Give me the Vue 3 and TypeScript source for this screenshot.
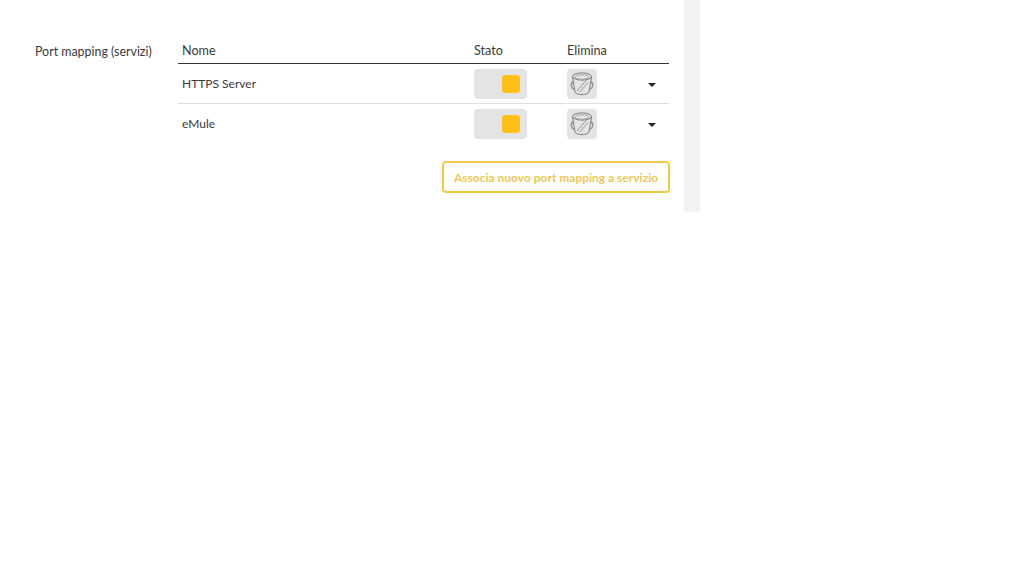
<script setup lang="ts">
const rows: string[] = ['HTTPS Server', 'eMule']
</script>

<template>
  <div class="panel">
    <main class="content">
      <div class="label">Port mapping (servizi)</div>
      <div class="body">
        <div class="row head">
          <div class="name">Nome</div>
          <div class="state">Stato</div>
          <div>Elimina</div>
        </div>
        <div class="rows">
          <div v-for="r in rows" :key="r" class="row item">
            <div class="name">{{ r }}</div>
            <div class="state">
              <div class="toggle"><span class="knob"></span></div>
            </div>
            <div class="del">
              <button class="trash" aria-label="Elimina">
                <svg width="26" height="26" viewBox="0 0 26 26" fill="none" stroke="#7c7c7c" stroke-width="1">
                  <ellipse cx="13" cy="5.5" rx="9.5" ry="3.6" />
                  <ellipse cx="13" cy="6" rx="7" ry="2.2" stroke="#a5a5a5" />
                  <path d="M3.5 6 L6 21 C7 24.5 19 24.5 20 21 L22.5 6" />
                  <path d="M4.4 10.5 C1.2 12 1.6 17 5.4 18.5 M21.6 10.5 C24.8 12 24.4 17 20.6 18.5" stroke="#949494" stroke-width="1.4" />
                  <path d="M8 20 L17.5 9 M10.5 21.5 L19 11.5" stroke="#9a9a9a" />
                </svg>
              </button>
              <span class="caret"></span>
            </div>
          </div>
        </div>
        <div class="actions">
          <button class="add">Associa nuovo port mapping a servizio</button>
        </div>
      </div>
    </main>
    <aside class="scroll"></aside>
  </div>
</template>

<style>
html, body { margin: 0; background: #fff; }
</style>

<style scoped>
.panel {
  width: 700px;
  height: 212px;
  display: flex;
  font-family: Lato, "Noto Sans", sans-serif;
  font-size: 12.6px;
  color: #3a3a3a;
}
.content {
  flex: 1;
  display: flex;
  padding: 36px 15px 0 35px;
  box-sizing: border-box;
}
.label {
  width: 143px;
  line-height: 31px;
  font-size: 12.4px;
}
.body { width: 491px; }
.row {
  display: grid;
  grid-template-columns: 296px 93px 1fr;
  align-items: center;
}
.name { padding-left: 4px; }
.head {
  height: 26px;
  padding-top: 1px;
  border-bottom: 1px solid #333;
}
.item {
  height: 39px;
  border-bottom: 1px solid #dedede;
  font-size: 12px;
}
.item:last-child { border-bottom: 0; }
.toggle {
  width: 53px;
  height: 30px;
  border-radius: 4px;
  background: #e4e4e4;
  display: flex;
  align-items: center;
  justify-content: flex-end;
  padding-right: 7px;
  box-sizing: border-box;
}
.knob {
  width: 18px;
  height: 18px;
  border-radius: 3px;
  background: #fdc016;
}
.del {
  display: flex;
  align-items: center;
  justify-content: space-between;
  padding-right: 13px;
}
.trash {
  width: 30px;
  height: 30px;
  border: 0;
  padding: 0;
  border-radius: 4px;
  background: #e4e4e4;
  display: flex;
  align-items: center;
  justify-content: center;
}
.caret {
  width: 0;
  height: 0;
  margin-top: 2px;
  border-left: 4px solid transparent;
  border-right: 4px solid transparent;
  border-top: 4px solid #222;
}
.actions {
  display: flex;
  justify-content: flex-end;
  margin-top: 18px;
}
.add {
  width: 228px;
  height: 32px;
  margin-right: -1px;
  padding: 0;
  border: 2px solid #f0cb45;
  border-radius: 4px;
  background: #fff;
  color: #eec755;
  font: 700 12px Lato, "Noto Sans", sans-serif;
  white-space: nowrap;
}
.scroll {
  width: 16px;
  background: #f3f3f3;
}
</style>
